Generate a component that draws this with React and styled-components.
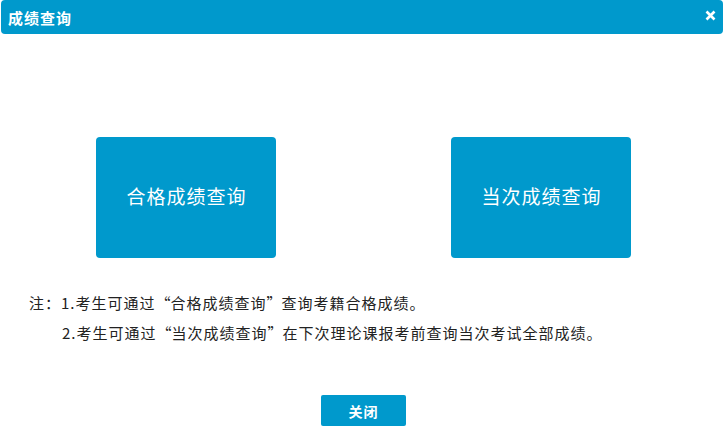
import styled, { createGlobalStyle } from "styled-components";

const GlobalStyle = createGlobalStyle`
  html, body {
    margin: 0;
    padding: 0;
    background: #fff;
    font-family: "Noto Sans CJK SC", "Noto Sans", sans-serif;
  }
`;

const Dialog = styled.div`
  width: 723px;
  height: 442px;
  background: #fff;
  display: flex;
  flex-direction: column;
`;

const Header = styled.div`
  height: 34px;
  margin-left: 1px;
  background: #0099cc;
  border-radius: 4px;
  display: flex;
  align-items: center;
  justify-content: space-between;
  padding: 0 7px 0 7px;
  color: #fff;
`;

const Title = styled.span`
  font-size: 15px;
  font-weight: bold;
  letter-spacing: 1px;
`;

const Close = styled.svg`
  width: 11px;
  height: 11px;
  margin-top: -4px;
  cursor: pointer;
`;

const Cards = styled.div`
  display: flex;
  gap: 175px;
  padding-left: 96px;
  margin-top: 103px;
`;

const Card = styled.div`
  width: 180px;
  height: 121px;
  background: #0099cc;
  border-radius: 4px;
  color: #fff;
  font-size: 19px;
  letter-spacing: 1px;
  display: flex;
  align-items: center;
  justify-content: center;
  padding: 0 0 5px 1px;
  box-sizing: border-box;
  cursor: pointer;
`;

const Notes = styled.div`
  margin-top: 30px;
  padding-left: 29px;
  font-size: 15px;
  letter-spacing: 1px;
  color: #222;
  line-height: 30px;
`;

const NoteRow = styled.div`
  padding-left: ${(p) => (p.$indent ? "33px" : "0")};
  white-space: nowrap;
`;

const Quote = styled.span`
  display: inline-block;
  width: 15px;
  text-align: ${(p) => (p.$close ? "left" : "right")};
`;

const Footer = styled.div`
  margin-top: 47px;
  display: flex;
  justify-content: center;
  padding-left: 4px;
`;

const Button = styled.button`
  width: 85px;
  height: 31px;
  border: none;
  border-radius: 2px;
  background: #0099cc;
  color: #fff;
  font-family: inherit;
  font-size: 14px;
  font-weight: bold;
  letter-spacing: 1px;
  cursor: pointer;
`;

export default function App() {
  return (
    <>
      <GlobalStyle />
      <Dialog lang="zh-CN">
        <Header>
          <Title>成绩查询</Title>
          <Close viewBox="0 0 11 11">
            <path d="M1.5 1.5 L9.5 9.5 M9.5 1.5 L1.5 9.5" stroke="#fff" strokeWidth="2.6" />
          </Close>
        </Header>
        <Cards>
          <Card>合格成绩查询</Card>
          <Card>当次成绩查询</Card>
        </Cards>
        <Notes>
          <NoteRow>
            注：1.考生可通过<Quote>“</Quote>合格成绩查询<Quote $close>”</Quote>查询考籍合格成绩。
          </NoteRow>
          <NoteRow $indent>
            2.考生可通过<Quote>“</Quote>当次成绩查询<Quote $close>”</Quote>在下次理论课报考前查询当次考试全部成绩。
          </NoteRow>
        </Notes>
        <Footer>
          <Button>关闭</Button>
        </Footer>
      </Dialog>
    </>
  );
}
